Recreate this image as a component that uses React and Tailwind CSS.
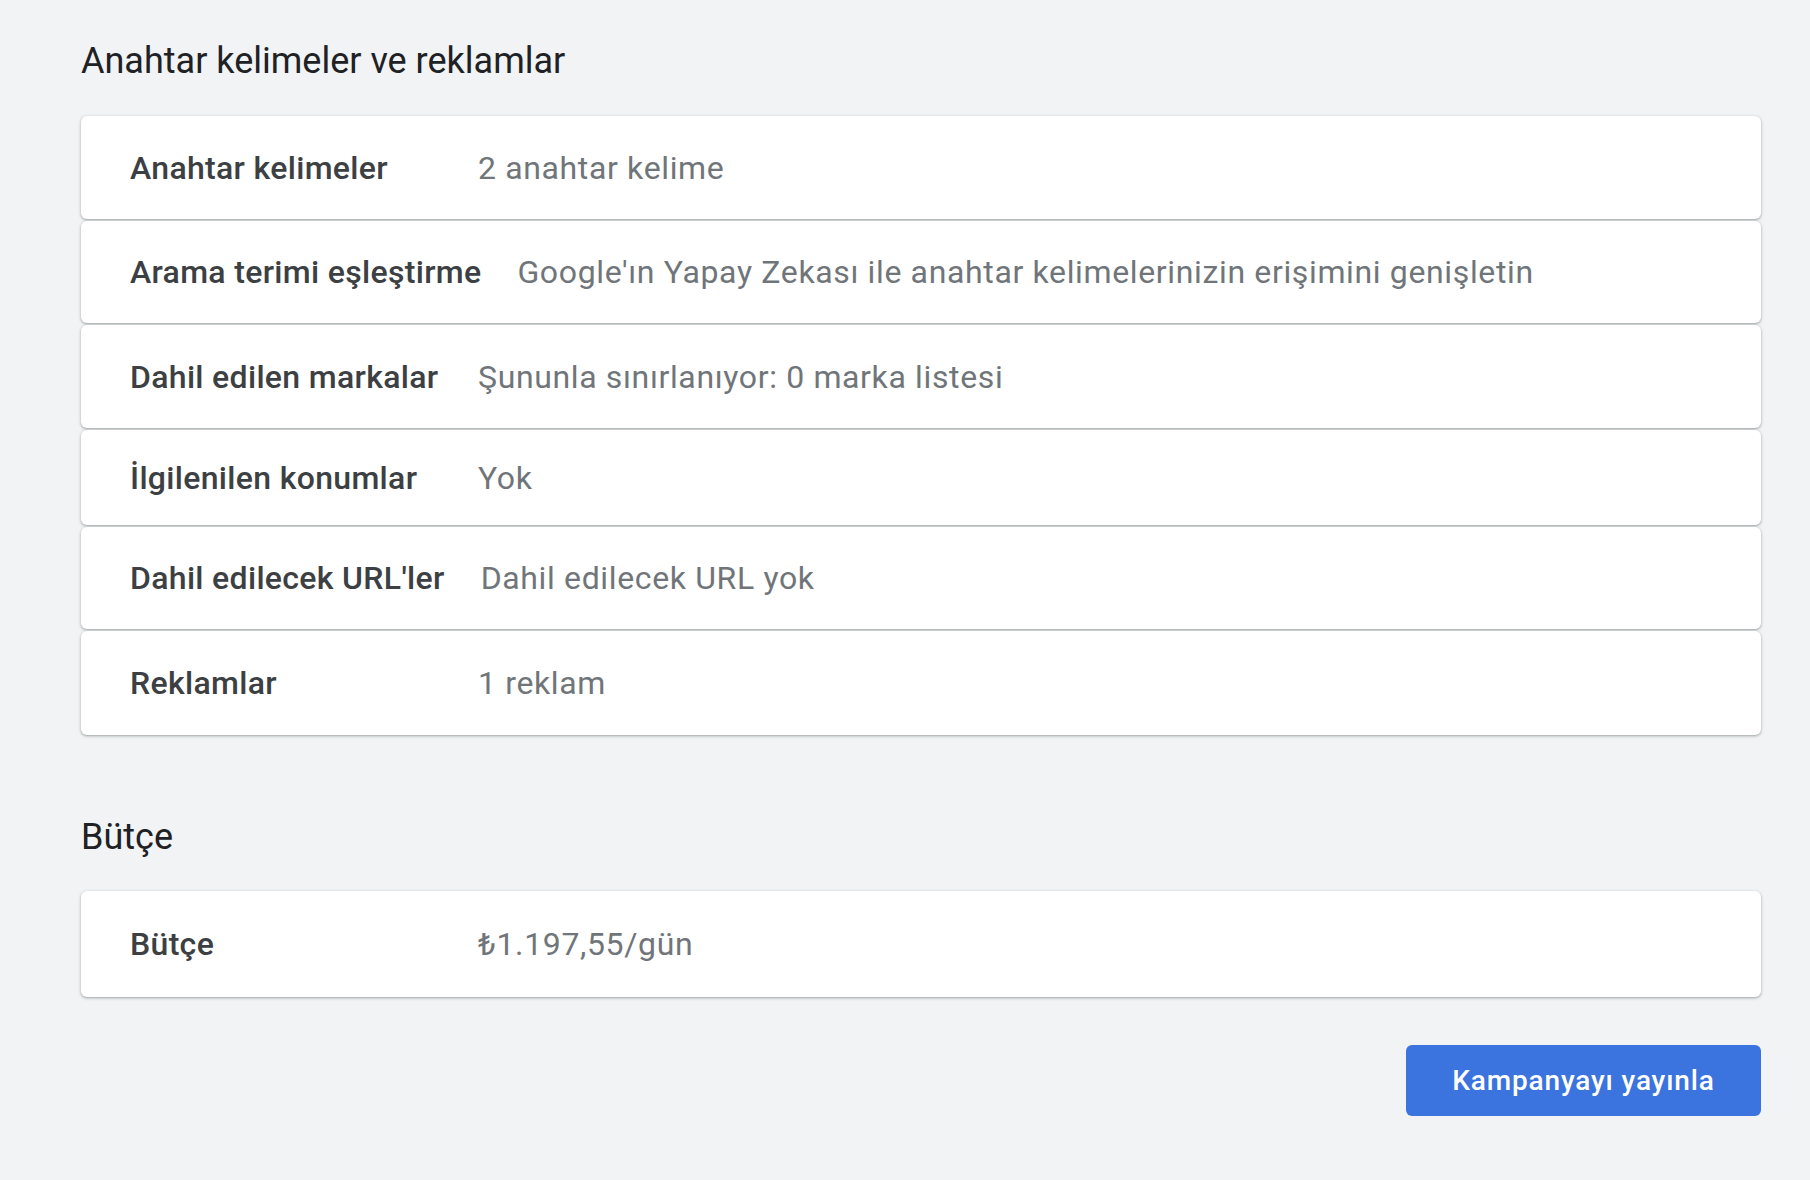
import React from 'react';

const keywordRows = [
  { label: 'Anahtar kelimeler', value: '2 anahtar kelime', h: 'h-[103px]' },
  { label: 'Arama terimi eşleştirme', value: "Google'ın Yapay Zekası ile anahtar kelimelerinizin erişimini genişletin", h: 'h-[102px]' },
  { label: 'Dahil edilen markalar', value: 'Şununla sınırlanıyor: 0 marka listesi', h: 'h-[103px]' },
  { label: 'İlgilenilen konumlar', value: 'Yok', h: 'h-[95px]' },
  { label: "Dahil edilecek URL'ler", value: 'Dahil edilecek URL yok', h: 'h-[102px]' },
  { label: 'Reklamlar', value: '1 reklam', h: 'h-[104px]' },
];

// Single summary row, each one is its own little card
const SummaryRow = ({ label, value, h }) => (
  <div
    className={`${h} flex items-center rounded-[6px] bg-white pl-[49px] pr-8 shadow-[0_1px_2px_0_rgba(60,64,67,0.3),0_1px_3px_1px_rgba(60,64,67,0.12)]`}
  >
    <span className="min-w-[312px] mr-[36px] whitespace-nowrap text-[32px] tracking-[0.01em] font-medium text-[#3c4043]">{label}</span>
    <span className="whitespace-nowrap text-[32px] tracking-[0.02em] text-[#70757a]">{value}</span>
  </div>
);

const SectionTitle = ({ children }) => (
  <h2 className="text-[36px] leading-[44px] font-normal text-[#202124]">{children}</h2>
);

export default function App() {
  return (
    <div
      className="min-h-[1180px] w-full bg-[#f1f3f4] pl-[81px] pr-[49px] pt-[39px]"
      style={{ fontFamily: 'Roboto, "Noto Sans", Arial, sans-serif' }}
    >
      <SectionTitle>Anahtar kelimeler ve reklamlar</SectionTitle>
      <div className="mt-[33px] flex flex-col gap-[2px]">
        {keywordRows.map((row) => (
          <SummaryRow key={row.label} {...row} />
        ))}
      </div>

      <div className="mt-[80px]">
        <SectionTitle>Bütçe</SectionTitle>
      </div>
      <div className="mt-[32px]">
        <SummaryRow label="Bütçe" value="₺1.197,55/gün" h="h-[106px]" />
      </div>

      <div className="mt-[48px] flex justify-end">
        <button
          type="button"
          className="h-[71px] w-[355px] rounded-[6px] bg-[#3b73df] text-[28px] tracking-[0.03em] font-medium text-white"
        >
          Kampanyayı yayınla
        </button>
      </div>
    </div>
  );
}
